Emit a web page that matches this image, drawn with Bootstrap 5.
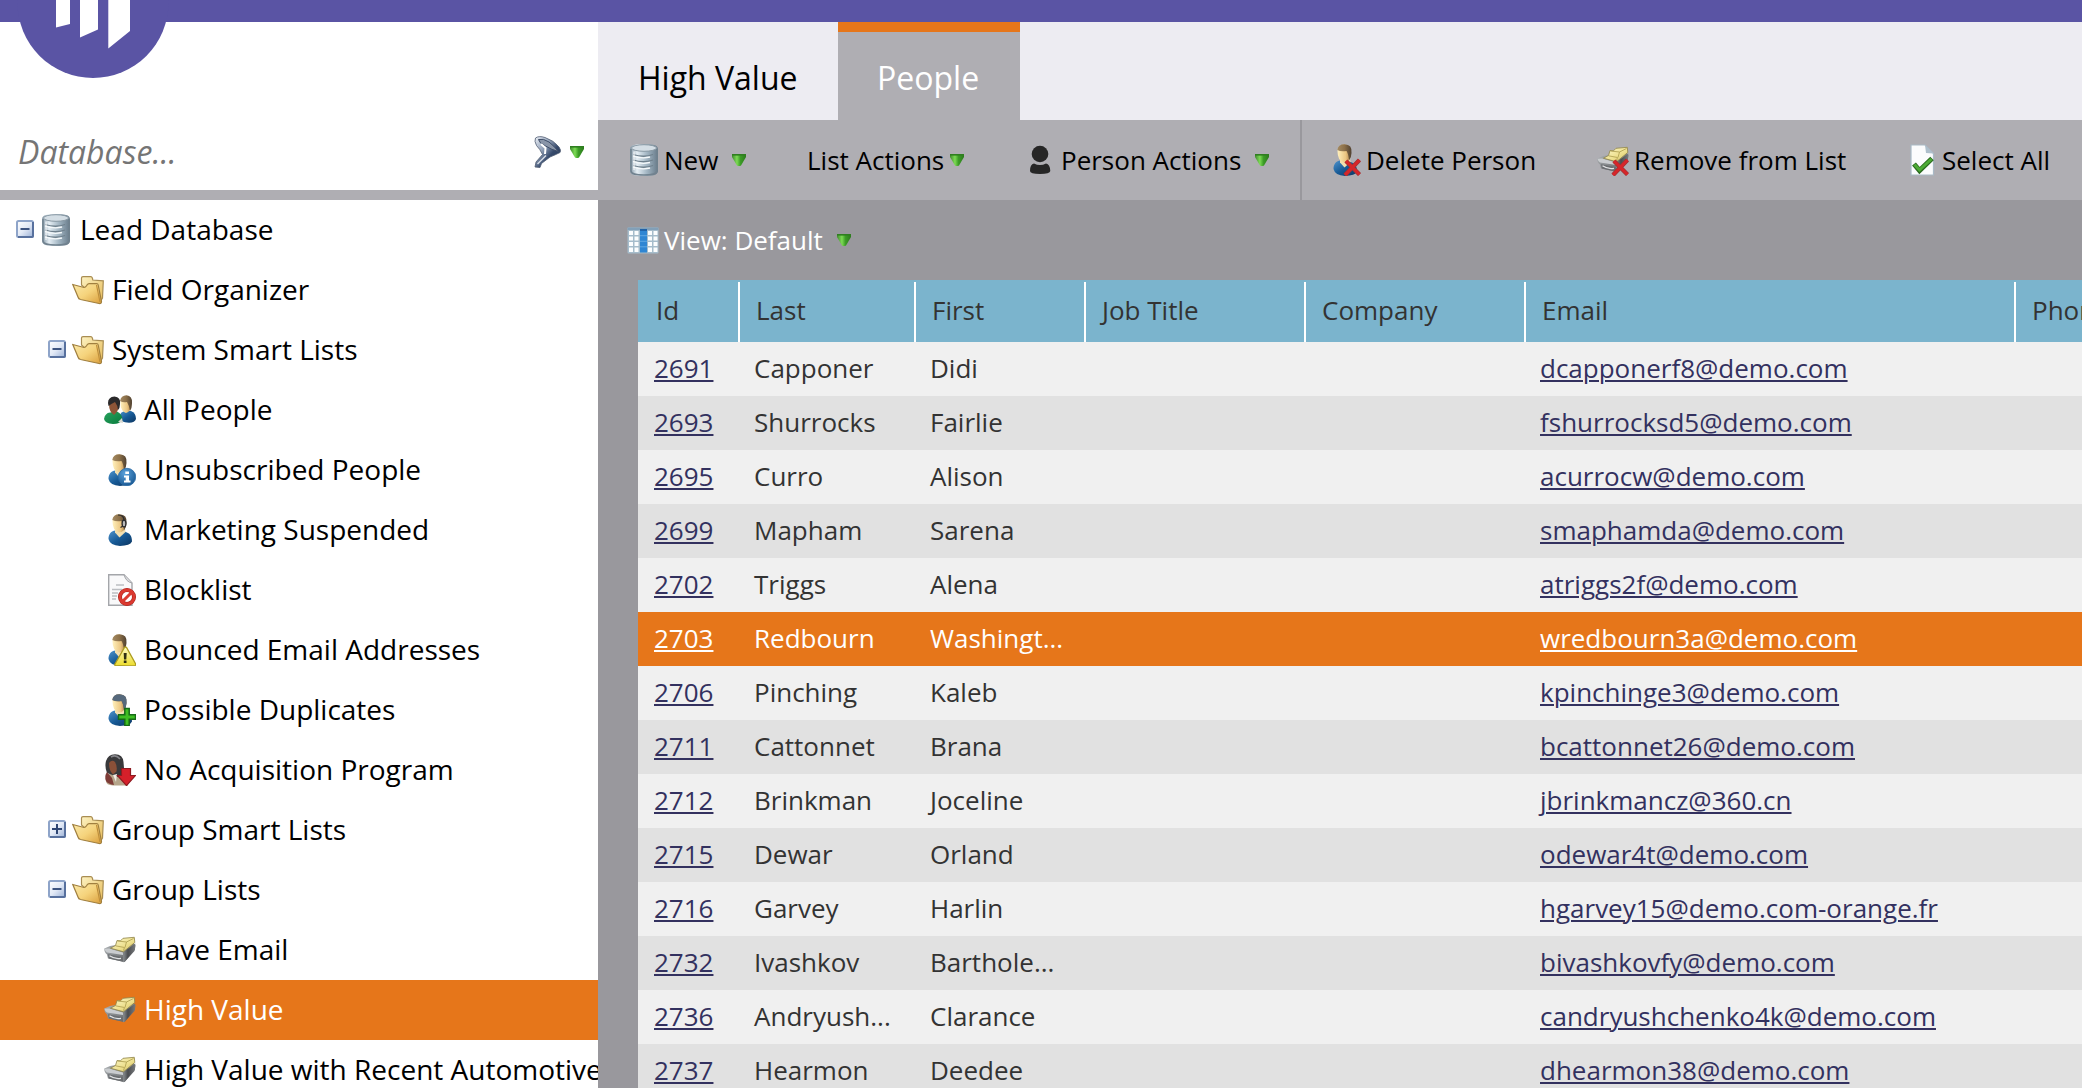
<!DOCTYPE html>
<html lang="en">
<head>
<meta charset="utf-8">
<meta name="viewport" content="width=device-width, initial-scale=1">
<title>Lead Database - High Value</title>
<link href="https://cdn.jsdelivr.net/npm/bootstrap@5.3.0/dist/css/bootstrap.min.css" rel="stylesheet">
<style>
  body { font-family: "Open Sans", sans-serif; font-size: 26px; color: #000; height: 1088px; background: #99989d; }
  .brandbar { height: 22px; background: #5a54a4; }
  .logo { top: -75px; left: 17px; width: 152px; height: 154px; z-index: 5; }
  .side { width: 598px; background: #fff; }
  .search { height: 168px; padding: 81px 14px 0 18px; }
  .search-label { font-size: 32px; line-height: 98px; font-style: italic; color: #757575; }
  .search-tools { height: 98px; }
  .divide { height: 10px; background: #afaeb3; }
  .tree { font-size: 28px; }
  .node { height: 60px; padding-left: 8px; white-space: nowrap; }
  .node.l2 { padding-left: 40px; }
  .node.l3 { padding-left: 72px; }
  .node .label { padding: 0 0 2px 8px; line-height: 58px; }
  .node.active { background: #e6761a; color: #fff; }
  .ico { width: 32px; height: 32px; flex: none; }
  .arrow { width: 14px; height: 12px; flex: none; }
  .tabs { height: 98px; background: #edecf2; font-size: 32px; line-height: 92px; }
  .tab-item { border-top: 10px solid transparent; height: 98px; }
  .tab-item.first { width: 240px; padding-left: 40px; }
  .tab-item.active { width: 182px; padding-left: 39px; background: #afaeb3; border-top-color: #e6761a; color: #fff; }
  .tools { height: 80px; background: #afaeb3; padding-left: 30px; line-height: 80px; white-space: nowrap; }
  .t-new { width: 178px; } .t-list { width: 218px; padding-left: 1px; } .t-person { width: 276px; }
  .t-del { width: 297px; padding-left: 27px; border-left: 2px solid #99989d; height: 80px; }
  .t-rem { width: 309px; }
  .viewbar { height: 80px; padding-left: 29px; line-height: 80px; color: #fff; }
  .gap-ico { margin-left: 4px; } .gap-ico5 { margin-left: 5px; } .arr { margin-left: 14px; } .arr-s { margin-left: 6px; }
  .gridwrap { margin-left: 40px; }
  .leads { table-layout: fixed; width: 1700px; border-collapse: collapse; color: #333; }
  .leads th { height: 62px; background: #7bb4cd linear-gradient(#fff, #fff) no-repeat right bottom / 2px 60px; font-weight: 400; line-height: 60px; padding: 0 0 2px 16px; }
  .leads th:first-child { padding-left: 18px; }
  .leads td { height: 54px; line-height: 52px; padding: 0 0 2px 14px; background: #f0f0f0; white-space: nowrap; overflow: hidden; }
  .leads td:first-child { padding-left: 16px; }
  .leads tr:nth-child(even) td { background: #e1e1e1; }
  .leads a { color: #33315f; text-decoration: underline; text-decoration-thickness: 2px; text-underline-offset: 2px; }
  .leads tr.sel td, .leads tr.sel td a { background: #e6761a; color: #fff; }
</style>
<script src="https://cdn.jsdelivr.net/npm/bootstrap@5.3.0/dist/js/bootstrap.bundle.min.js"></script>
</head>
<body class="overflow-hidden">

<svg width="0" height="0" class="position-absolute">
  <defs>
    <linearGradient id="gSteel" x1="0" x2="1" y1="0" y2="0"><stop offset="0" stop-color="#8296a5"/><stop offset=".25" stop-color="#e6eff5"/><stop offset=".6" stop-color="#a3b6c3"/><stop offset="1" stop-color="#677a89"/></linearGradient>
    <linearGradient id="gBox" x1="0" x2="1" y1="0" y2="1"><stop offset="0" stop-color="#fff"/><stop offset=".5" stop-color="#e3eaf6"/><stop offset="1" stop-color="#9cb2d6"/></linearGradient>
    <linearGradient id="gFold" x1="0" x2="1" y1="0" y2="1"><stop offset="0" stop-color="#fbe9a9"/><stop offset=".5" stop-color="#f5d37c"/><stop offset="1" stop-color="#d99e3c"/></linearGradient>
    <linearGradient id="gFoldB" x1="0" x2="1" y1="0" y2="1"><stop offset="0" stop-color="#fdf3c4"/><stop offset="1" stop-color="#e6bb58"/></linearGradient>
    <linearGradient id="gBlue" x1="0" x2="1" y1="0" y2="1"><stop offset="0" stop-color="#4f93cc"/><stop offset=".5" stop-color="#175a96"/><stop offset="1" stop-color="#0c3560"/></linearGradient>
    <linearGradient id="gGreenBody" x1="0" x2="1" y1="0" y2="1"><stop offset="0" stop-color="#2aa35f"/><stop offset="1" stop-color="#087a3c"/></linearGradient>
    <linearGradient id="gSkin" x1="0" x2="1" y1="0" y2="0"><stop offset="0" stop-color="#fff0bd"/><stop offset=".6" stop-color="#ecc783"/><stop offset="1" stop-color="#a97c45"/></linearGradient>
    <linearGradient id="gHair" x1="0" x2="1" y1="0" y2="0"><stop offset="0" stop-color="#a48a62"/><stop offset=".5" stop-color="#8c7049"/><stop offset="1" stop-color="#4f4030"/></linearGradient>
    <linearGradient id="gArr" x1="0" x2="1" y1="0" y2="0"><stop offset="0" stop-color="#3f8a2d"/><stop offset=".35" stop-color="#7ddb55"/><stop offset=".6" stop-color="#3c9d26"/><stop offset="1" stop-color="#2c7a1d"/></linearGradient>
    <linearGradient id="gCard" x1="0" x2="1" y1="0" y2="1"><stop offset="0" stop-color="#fdf9d0"/><stop offset=".6" stop-color="#eddf8c"/><stop offset="1" stop-color="#c9b562"/></linearGradient>
    <linearGradient id="gDraw" x1="0" x2="1" y1="0" y2="1"><stop offset="0" stop-color="#b4b8ba"/><stop offset=".5" stop-color="#84888b"/><stop offset="1" stop-color="#505356"/></linearGradient>
    <linearGradient id="gSide" x1="0" x2="1" y1="0" y2="0"><stop offset="0" stop-color="#8d9194"/><stop offset=".4" stop-color="#4a4c4f"/><stop offset="1" stop-color="#77797c"/></linearGradient>
    <linearGradient id="gFun" x1="0" x2="1" y1="0" y2="1"><stop offset="0" stop-color="#eef2f8"/><stop offset=".35" stop-color="#93a2b9"/><stop offset=".6" stop-color="#364a6c"/><stop offset="1" stop-color="#233450"/></linearGradient>
    <linearGradient id="gYel" x1="0" x2="0" y1="0" y2="1"><stop offset="0" stop-color="#fffbc0"/><stop offset="1" stop-color="#ecdc2d"/></linearGradient>
    <radialGradient id="gInfo" cx=".4" cy=".3" r=".8"><stop offset="0" stop-color="#5ba2dc"/><stop offset="1" stop-color="#14528c"/></radialGradient>
  </defs>
  <symbol id="db" viewBox="0 0 32 32">
    <path d="M2 5.500C2 .500 8 .3 16 .3S30 .500 30 5.500V26.500C30 31.500 24 32 16 32S2 31.500 2 26.500Z" fill="url(#gSteel)"/>
    <path d="M3 5V26.500C3 30.500 8 31 16 31S29 30.500 29 26.500V5" fill="none" stroke="#71828f" stroke-width="1.500"/>
    <ellipse cx="16" cy="4" rx="12.500" ry="3.300" fill="#d4dee5" stroke="#8898a3"/>
    <g fill="none" stroke="#6f808c" stroke-width="1.300"><path d="M5 10.500Q16 14 25 10.500M5 16Q16 19.500 25 16M5 21.500Q16 25 25 21.500"/></g>
    <g fill="none" stroke="#f5f9fb" stroke-width="1.300"><path d="M5 12Q14 15 22 13M5 17.500Q14 20.500 22 18.500M5 23Q14 26 22 24"/></g>
    <path d="M6 7.500V26" stroke="#fff" stroke-width="2" opacity=".5"/>
  </symbol>
  <symbol id="minus" viewBox="0 0 32 32">
    <rect x="9" y="7" width="16" height="16" rx="1.500" fill="url(#gBox)" stroke="#8ea4c9" stroke-width="2"/>
    <path d="M25 8V22Q25 23 24 23H10" fill="none" stroke="#58719e" stroke-width="2"/>
    <path d="M12.500 15H21.500" stroke="#3d5480" stroke-width="2"/>
  </symbol>
  <symbol id="plus" viewBox="0 0 32 32">
    <rect x="9" y="7" width="16" height="16" rx="1.500" fill="url(#gBox)" stroke="#8ea4c9" stroke-width="2"/>
    <path d="M25 8V22Q25 23 24 23H10" fill="none" stroke="#58719e" stroke-width="2"/>
    <path d="M12 15H22M17 10V20" stroke="#2f4673" stroke-width="2"/>
  </symbol>
  <symbol id="folder" viewBox="0 0 32 32">
    <path d="M9.500 11V4Q9.500 2.700 11 2.600L18.500 2.500Q20.500 2.600 20.800 6L31.300 6.800L30.500 24L28 28Z" fill="url(#gFoldB)" stroke="#a98d52" stroke-width="1.200"/>
    <path d="M.8 10.500L12 13.500Q13.500 13.500 14.500 11.800Q15.500 9.800 17 9.700L24.500 9.500Q26 9.500 26.200 11L29.500 27.500Q29.500 30 27 29.500L8.500 25.500Q6.500 25 6 23Z" fill="url(#gFold)" stroke="#a07f3f" stroke-width="1.200"/>
    <path d="M24.500 11L28 28" fill="none" stroke="#c08f3b" stroke-width="1.200"/>
  </symbol>
  <symbol id="person" viewBox="0 0 32 32">
    <path d="M4.500 25C4.500 20 7 17.500 10.500 16.500L16 20.500L20.500 17.500C26 19 28 22 28 27.500Q26 31.800 16 31.900Q6 31.500 4.500 25Z" fill="url(#gBlue)"/>
    <path d="M11 15.500L21 14L21.500 18L15.500 23.500L11 18.500Z" fill="#f2dfb0"/>
    <path d="M8.500 7Q8.500 1 15 .5Q22 .8 22 8Q22 18 15 18.500Q8.500 17 8.500 7Z" fill="url(#gSkin)"/>
    <path d="M8.300 6Q9 .2 15.500 .2Q23.500 .5 22.500 9Q22.300 14 20 16.500Q19.500 10 17.500 7Q12 8 8.300 6Z" fill="url(#gHair)"/>
  </symbol>
  <symbol id="p-info" viewBox="0 0 32 32">
    <use href="#person" width="32" height="32"/>
    <circle cx="23" cy="23" r="8.700" fill="url(#gInfo)" stroke="#2a6ba6" stroke-width=".8"/>
    <path d="M21.300 17.500H25V20H21.300ZM20 21.500H25V26.500H26.500V28.500H20V26.500H21.700V23.500H20Z" fill="#fff"/>
  </symbol>
  <symbol id="p-headset" viewBox="0 0 32 32">
    <use href="#person" width="32" height="32"/>
    <path d="M14 1Q20.500 1 20 7M16.500 13.500L19 12" fill="none" stroke="#2b2b2d" stroke-width="1.200"/>
    <ellipse cx="20" cy="9.500" rx="1.900" ry="3.400" fill="#bbb" stroke="#2b2b2d" stroke-width="1.300"/>
  </symbol>
  <symbol id="p-warn" viewBox="0 0 32 32">
    <use href="#person" width="32" height="32"/>
    <path d="M20.500 13.500Q21.500 12.500 22.500 13.500L31.700 30Q31.800 31.800 30 31.800H12Q10.200 31.600 11 30Z" fill="url(#gYel)" stroke="#ad9c1f" stroke-width="1.300"/>
    <path d="M19.700 19H22.700L22.300 25.500H20ZM19.800 26.500H22.500V29H19.800Z" fill="#2f2f12"/>
  </symbol>
  <symbol id="p-plus" viewBox="0 0 32 32">
    <use href="#person" width="32" height="32"/>
    <path d="M8.300 6Q9 .2 15.500 .2Q23.500 .5 22.500 9Q22.300 14 20 16.500Q19.500 10 17.500 7Q12 8 8.300 6Z" fill="#56697c"/>
    <path d="M20.800 14.500H25.200V20.800H31.500V25.200H25.200V31.600H20.800V25.200H14.500V20.800H20.800Z" fill="#3fbf22" stroke="#176b17" stroke-width="1.500"/>
  </symbol>
  <symbol id="p-x" viewBox="0 0 32 32">
    <use href="#person" width="32" height="32"/>
    <path d="M17 17L30.500 30.500M30.500 16L16 31" stroke="#9e3334" stroke-width="4.400"/><path d="M17 17L30.500 30.500M30.500 16L16 31" stroke="#d6262a" stroke-width="3"/>
  </symbol>
  <symbol id="p-down" viewBox="0 0 32 32">
    <path d="M2 27Q3 19 9 19L20 19Q24 22 24 31.500H9Q2 31 2 27Z" fill="#b5a58a"/>
    <path d="M2 7Q4 .5 11 .2Q19 .5 19.500 8L20.500 20L14 23L3 19Q.5 13 2 7Z" fill="#39393b"/>
    <path d="M5 9Q8 5 11 8Q13.500 12 12.500 17.500L9 20.500Q5 17 5 9Z" fill="#8a5038"/>
    <path d="M2 27Q0 22 3 18L8 24L10 31Q4 30 2 27Z" fill="#7e3c37"/>
    <path d="M9 21L13 20L12 28Z" fill="#f2ede6"/>
    <path d="M7 3Q12 0 16 5" stroke="#85858a" stroke-width="1.500" fill="none"/>
    <path d="M17.500 14.500H26.500V21.500H31.500L22.500 31.600L13.500 21.500H17.500Z" fill="#d5202a" stroke="#8e1a20" stroke-width="1.200"/>
  </symbol>
  <symbol id="people" viewBox="0 0 32 32">
    <path d="M15 24Q16 17 22 17L27 17Q32 19 32 25Q31 28.500 25 28.700Q16 28 15 24Z" fill="url(#gBlue)"/>
    <path d="M16.500 9Q17 2 22.500 2Q28 3 27.500 10Q27 18 22 19Q16.500 17 16.500 9Z" fill="url(#gSkin)"/>
    <path d="M16 7Q17 1.500 22.500 1.300Q28.500 2 28 9Q28 14 26 17Q25 11 23 8Q19 9 16 7Z" fill="url(#gHair)"/>
    <path d="M0 25Q1 19 6 18.500L13 17.500Q18.500 20 18.500 26Q16 29.800 9 30Q1 29.500 0 25Z" fill="url(#gGreenBody)"/>
    <path d="M5 10Q6 5 11 5Q15 6 15 12Q14 18 10 21Q5 18 5 10Z" fill="#8d5537"/>
    <path d="M4 9Q4 3 10.500 2.500Q17 3 16 10Q16 14 14 16Q13.500 11 11 8Q7 10 4.500 12Z" fill="#2b2a2b"/>
    <path d="M14 28L18 24L19 29Z" fill="#d8d9d0"/>
  </symbol>
  <symbol id="page-no" viewBox="0 0 32 32">
    <path d="M4.700 .7H20L28 9V31.300H4.700Z" fill="#f9f9fa" stroke="#a4a6aa" stroke-width="1.400"/>
    <path d="M20 .7Q22 8 28 9" fill="#dcdde0" stroke="#a4a6aa"/>
    <path d="M12 11H20M8 15.500H18M8 19H14M8 22H13M8 25H12" stroke="#bcbec2" stroke-width="1.500"/>
    <circle cx="23" cy="23" r="7" fill="#fff" stroke="#a5201a" stroke-width="4"/><circle cx="23" cy="23" r="7" fill="none" stroke="#dc3a30" stroke-width="2.800"/>
    <path d="M18.500 27.500L27.500 18.500" stroke="#dc3a30" stroke-width="3"/>
  </symbol>
  <symbol id="drawer" viewBox="0 0 32 32">
    <path d="M.3 14.500L6 12L29 8L31.500 11.500L30.500 17L20.500 28L4 24.500L3 20.500Q0 18 .3 14.500Z" fill="url(#gDraw)"/>
    <path d="M19.500 18L31.300 9.500L31 15.500L21 27.500Q20 28.500 19 28Z" fill="url(#gSide)"/>
    <path d="M.5 14.800L5 14.500L19 18.500V21L3 18.500Q1 17.500 .5 14.800Z" fill="#c9cccf"/>
    <path d="M4 20.300L19 23.300V27.800L5 24.600Z" fill="#6b6e71"/>
    <path d="M5.500 21.800Q11 25.500 17 24.300" fill="none" stroke="#e2e4e6" stroke-width="1.300"/>
    <path d="M6.500 14.200L11.500 11.500L13 6.500L16.500 6.800L19 4.300L30.300 3.300L30.800 8.500L19.500 17.800Z" fill="url(#gCard)" stroke="#8e8348" stroke-width=".8"/>
    <path d="M13.500 7L22.500 8L21 13.500M11.500 11.800L20.500 13.500L19.500 16.500M22.500 8L29.500 4.500" fill="none" stroke="#b3a455" stroke-width=".9"/>
  </symbol>
  <symbol id="drawer-x" viewBox="0 0 32 32">
    <use href="#drawer" width="32" height="32"/>
    <path d="M17 17L30.500 30.500M30.500 16L16 31" stroke="#9e3334" stroke-width="4.400"/><path d="M17 17L30.500 30.500M30.500 16L16 31" stroke="#d6262a" stroke-width="3"/>
  </symbol>
  <symbol id="silhouette" viewBox="0 0 32 32">
    <ellipse cx="16" cy="10" rx="8.300" ry="8.300" fill="#262626"/>
    <path d="M6 27Q6 20 10 19.500Q16 22.500 22 19.500Q26 20 26.300 27Q26 30 16 30T6 27Z" fill="#262626"/>
  </symbol>
  <symbol id="page-ok" viewBox="0 0 32 32">
    <path d="M5 1H19L27.500 9.500V31H5Z" fill="#fbfcfd" stroke="#a9b9c6" stroke-width="1.200"/>
    <path d="M19 1L20 9L27.500 9.500Z" fill="#aebfcb"/>
    <path d="M8 20L13.500 26.500L26 14.500" fill="none" stroke="#2a6b1f" stroke-width="5"/>
    <path d="M8.500 20.500L13.500 26L25.500 15" fill="none" stroke="#4cab35" stroke-width="3"/>
  </symbol>
  <symbol id="columns" viewBox="0 0 32 32">
    <rect x=".5" y="3.500" width="31" height="26" rx="1" fill="#a5bccb"/>
    <path d="M.5 3.500H31.500V6H.500Z" fill="#82a0b8"/>
    <g fill="#fbfdfe"><path d="M2 7h4v4H2zM7.500 7h4v4h-4zM21 7h4v4h-4zM26.500 7h4v4h-4zM2 12.500h4v4H2zM7.500 12.500h4v4h-4zM21 12.500h4v4h-4zM26.500 12.500h4v4h-4zM2 18h4v4H2zM7.500 18h4v4h-4zM21 18h4v4h-4zM26.500 18h4v4h-4zM2 23.500h4v4.500H2zM7.500 23.500h4v4.500h-4zM21 23.500h4v4.500h-4zM26.500 23.500h4v4.500h-4z"/></g>
    <rect x="13" y="5" width="7" height="23.500" fill="#2f86d3"/><path d="M13 11.700H20M13 17.300H20M13 22.800H20" stroke="#5fa8e4" stroke-width="1"/>
    <rect x="13" y="5" width="7" height="2" fill="#1f62a8"/>
  </symbol>
  <symbol id="funnel" viewBox="0 0 32 32">
    <path d="M3.500 2Q7 -.5 13 1.500Q22 4.500 27 11Q29.500 14.500 28 16.500Q23 19 18 21L9.500 27.500L8 31.500L3 31L4 26L10.500 18.500Q8 13 4.500 9.500Q2 5 3.500 2Z" fill="url(#gFun)" stroke="#505d72" stroke-width=".8"/>
    <path d="M6.500 3.500Q11 2 17 6Q22 10 26.500 15.500Q20 14 13.500 10Q7 7 6.500 3.500Z" fill="#8995a8" stroke="#3f4e68" stroke-width="1"/>
    <path d="M13 18L13.500 12L9 8" fill="none" stroke="#fff" stroke-width="2"/>
    <path d="M5.500 28L14 19.500" stroke="#d9dfe8" stroke-width="1.500"/>
  </symbol>
  <symbol id="caret" viewBox="0 0 14 12">
    <path d="M0 0H14V3L9 11.500Q7 12.500 5 11.500L0 3Z" fill="url(#gArr)"/>
    <path d="M0 .8H14" stroke="#2f7f20" stroke-width="1.600"/>
  </symbol>
</svg>

<svg class="logo position-absolute" viewBox="17 -75 152 154">
  <circle cx="93" cy="2.500" r="75.500" fill="#5a54a4"/>
  <path d="M56-30H70V24L56 27.500ZM80-30H98V29.500L80 37.500ZM108.300-30H130V31L108.300 48.500Z" fill="#fff"/>
</svg>

<header class="brandbar"></header>
<div class="d-flex">
  <aside class="side flex-shrink-0 overflow-hidden">
    <div class="search d-flex align-items-start">
      <span class="search-label">Database...</span>
      <span class="search-tools d-flex align-items-center ms-auto">
        <svg class="ico"><use href="#funnel"/></svg>
        <svg class="arrow arr-s"><use href="#caret"/></svg>
      </span>
    </div>
    <div class="divide"></div>
    <nav class="tree">
      <div class="node d-flex align-items-center"><svg class="ico"><use href="#minus"/></svg><svg class="ico"><use href="#db"/></svg><span class="label">Lead Database</span></div>
      <div class="node l2 d-flex align-items-center"><span class="ico"></span><svg class="ico"><use href="#folder"/></svg><span class="label">Field Organizer</span></div>
      <div class="node l2 d-flex align-items-center"><svg class="ico"><use href="#minus"/></svg><svg class="ico"><use href="#folder"/></svg><span class="label">System Smart Lists</span></div>
      <div class="node l3 d-flex align-items-center"><span class="ico"></span><svg class="ico"><use href="#people"/></svg><span class="label">All People</span></div>
      <div class="node l3 d-flex align-items-center"><span class="ico"></span><svg class="ico"><use href="#p-info"/></svg><span class="label">Unsubscribed People</span></div>
      <div class="node l3 d-flex align-items-center"><span class="ico"></span><svg class="ico"><use href="#p-headset"/></svg><span class="label">Marketing Suspended</span></div>
      <div class="node l3 d-flex align-items-center"><span class="ico"></span><svg class="ico"><use href="#page-no"/></svg><span class="label">Blocklist</span></div>
      <div class="node l3 d-flex align-items-center"><span class="ico"></span><svg class="ico"><use href="#p-warn"/></svg><span class="label">Bounced Email Addresses</span></div>
      <div class="node l3 d-flex align-items-center"><span class="ico"></span><svg class="ico"><use href="#p-plus"/></svg><span class="label">Possible Duplicates</span></div>
      <div class="node l3 d-flex align-items-center"><span class="ico"></span><svg class="ico"><use href="#p-down"/></svg><span class="label">No Acquisition Program</span></div>
      <div class="node l2 d-flex align-items-center"><svg class="ico"><use href="#plus"/></svg><svg class="ico"><use href="#folder"/></svg><span class="label">Group Smart Lists</span></div>
      <div class="node l2 d-flex align-items-center"><svg class="ico"><use href="#minus"/></svg><svg class="ico"><use href="#folder"/></svg><span class="label">Group Lists</span></div>
      <div class="node l3 d-flex align-items-center"><span class="ico"></span><svg class="ico"><use href="#drawer"/></svg><span class="label">Have Email</span></div>
      <div class="node l3 active d-flex align-items-center"><span class="ico"></span><svg class="ico"><use href="#drawer"/></svg><span class="label">High Value</span></div>
      <div class="node l3 d-flex align-items-center"><span class="ico"></span><svg class="ico"><use href="#drawer"/></svg><span class="label">High Value with Recent Automotive</span></div>
    </nav>
  </aside>

  <main class="flex-grow-1 overflow-hidden">
    <div class="tabs d-flex">
      <div class="tab-item first">High Value</div>
      <div class="tab-item active">People</div>
    </div>
    <div class="tools d-flex align-items-center">
      <div class="t-new d-flex align-items-center flex-shrink-0"><svg class="ico"><use href="#db"/></svg><span class="gap-ico">New</span><svg class="arrow arr"><use href="#caret"/></svg></div>
      <div class="t-list d-flex align-items-center flex-shrink-0"><span>List Actions</span><svg class="arrow arr-s"><use href="#caret"/></svg></div>
      <div class="t-person d-flex align-items-center flex-shrink-0"><svg class="ico"><use href="#silhouette"/></svg><span class="gap-ico5">Person Actions</span><svg class="arrow arr"><use href="#caret"/></svg></div>
      <div class="t-del d-flex align-items-center flex-shrink-0"><svg class="ico"><use href="#p-x"/></svg><span class="gap-ico5">Delete Person</span></div>
      <div class="t-rem d-flex align-items-center flex-shrink-0"><svg class="ico"><use href="#drawer-x"/></svg><span class="gap-ico5">Remove from List</span></div>
      <div class="d-flex align-items-center flex-shrink-0"><svg class="ico"><use href="#page-ok"/></svg><span class="gap-ico">Select All</span></div>
    </div>
    <div class="viewbar d-flex align-items-center"><svg class="ico"><use href="#columns"/></svg><span class="gap-ico5">View: Default</span><svg class="arrow arr"><use href="#caret"/></svg></div>
    <div class="gridwrap overflow-hidden">
      <table class="leads">
        <colgroup><col style="width:102px"><col style="width:176px"><col style="width:170px"><col style="width:220px"><col style="width:220px"><col style="width:490px"><col></colgroup>
        <thead><tr><th>Id</th><th>Last</th><th>First</th><th>Job Title</th><th>Company</th><th>Email</th><th>Phone</th></tr></thead>
        <tbody>
          <tr><td><a href="#">2691</a></td><td>Capponer</td><td>Didi</td><td></td><td></td><td><a href="#">dcapponerf8@demo.com</a></td><td></td></tr>
          <tr><td><a href="#">2693</a></td><td>Shurrocks</td><td>Fairlie</td><td></td><td></td><td><a href="#">fshurrocksd5@demo.com</a></td><td></td></tr>
          <tr><td><a href="#">2695</a></td><td>Curro</td><td>Alison</td><td></td><td></td><td><a href="#">acurrocw@demo.com</a></td><td></td></tr>
          <tr><td><a href="#">2699</a></td><td>Mapham</td><td>Sarena</td><td></td><td></td><td><a href="#">smaphamda@demo.com</a></td><td></td></tr>
          <tr><td><a href="#">2702</a></td><td>Triggs</td><td>Alena</td><td></td><td></td><td><a href="#">atriggs2f@demo.com</a></td><td></td></tr>
          <tr class="sel"><td><a href="#">2703</a></td><td>Redbourn</td><td>Washingt...</td><td></td><td></td><td><a href="#">wredbourn3a@demo.com</a></td><td></td></tr>
          <tr><td><a href="#">2706</a></td><td>Pinching</td><td>Kaleb</td><td></td><td></td><td><a href="#">kpinchinge3@demo.com</a></td><td></td></tr>
          <tr><td><a href="#">2711</a></td><td>Cattonnet</td><td>Brana</td><td></td><td></td><td><a href="#">bcattonnet26@demo.com</a></td><td></td></tr>
          <tr><td><a href="#">2712</a></td><td>Brinkman</td><td>Joceline</td><td></td><td></td><td><a href="#">jbrinkmancz@360.cn</a></td><td></td></tr>
          <tr><td><a href="#">2715</a></td><td>Dewar</td><td>Orland</td><td></td><td></td><td><a href="#">odewar4t@demo.com</a></td><td></td></tr>
          <tr><td><a href="#">2716</a></td><td>Garvey</td><td>Harlin</td><td></td><td></td><td><a href="#">hgarvey15@demo.com-orange.fr</a></td><td></td></tr>
          <tr><td><a href="#">2732</a></td><td>Ivashkov</td><td>Barthole...</td><td></td><td></td><td><a href="#">bivashkovfy@demo.com</a></td><td></td></tr>
          <tr><td><a href="#">2736</a></td><td>Andryush...</td><td>Clarance</td><td></td><td></td><td><a href="#">candryushchenko4k@demo.com</a></td><td></td></tr>
          <tr><td><a href="#">2737</a></td><td>Hearmon</td><td>Deedee</td><td></td><td></td><td><a href="#">dhearmon38@demo.com</a></td><td></td></tr>
        </tbody>
      </table>
    </div>
  </main>
</div>
</body>
</html>
